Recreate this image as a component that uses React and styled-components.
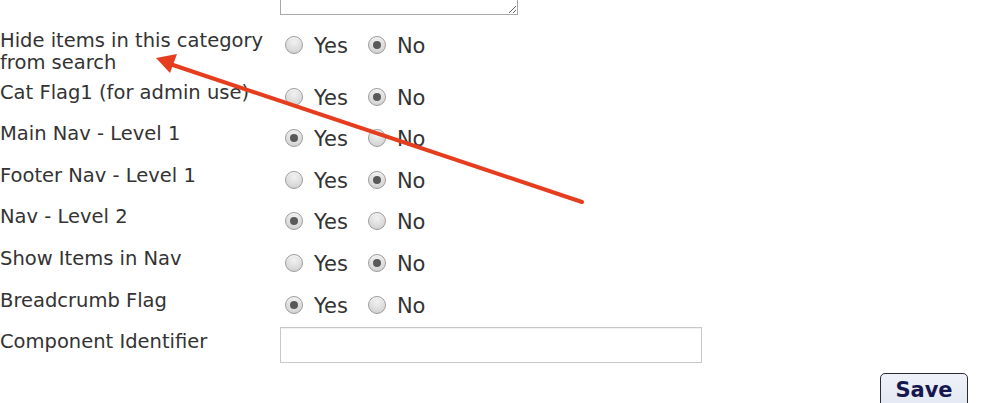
import React from 'react'
import styled, { createGlobalStyle } from 'styled-components'

const GlobalStyle = createGlobalStyle`
    html, body {
        margin: 0;
        padding: 0;
        background: #fff;
        overflow: hidden;
    }
    body {
        font-family: "DejaVu Sans", Verdana, sans-serif;
        color: #333;
    }
`

const flags = [
    { label: 'Hide items in this category from search', value: 'no' },
    { label: 'Cat Flag1 (for admin use)', value: 'no' },
    { label: 'Main Nav - Level 1', value: 'yes' },
    { label: 'Footer Nav - Level 1', value: 'no' },
    { label: 'Nav - Level 2', value: 'yes' },
    { label: 'Show Items in Nav', value: 'no' },
    { label: 'Breadcrumb Flag', value: 'yes' },
]

function Radio({ checked, text }) {
    return (
        <Option>
            <Circle checked={checked} />
            <span>{text}</span>
        </Option>
    )
}

function Arrow() {
    return (
        <Overlay width="1000" height="403" viewBox="0 0 1000 403">
            <line x1="582" y1="202" x2="170" y2="64" stroke="#e63d1e" strokeWidth="4" strokeLinecap="round" />
            <polygon points="156,58 177,54 170,73" fill="#e63d1e" />
        </Overlay>
    )
}

function App() {
    return (
        <Page>
            <GlobalStyle />
            <Form>
                <Row>
                    <Label />
                    <Control>
                        <TextArea defaultValue="" />
                    </Control>
                </Row>

                {flags.map((f) => (
                    <Row key={f.label}>
                        <Label>{f.label}</Label>
                        <Control>
                            <Radio checked={f.value === 'yes'} text="Yes" />
                            <Radio checked={f.value === 'no'} text="No" />
                        </Control>
                    </Row>
                ))}

                <Row>
                    <Label>Component Identifier</Label>
                    <Control>
                        <Input type="text" />
                    </Control>
                </Row>
            </Form>

            <Actions>
                <SaveButton>Save</SaveButton>
            </Actions>

            <Arrow />
        </Page>
    )
}

const Page = styled.div`
    position: relative;
    width: 1000px;
    height: 403px;
    overflow: hidden;
`

const Form = styled.div`
    display: flex;
    flex-direction: column;
    gap: 7.6px;
    margin-top: -11.6px;
`

const Row = styled.div`
    display: grid;
    grid-template-columns: 280px 1fr;
    align-items: start;
    min-height: 34px;
`

const Label = styled.div`
    font-size: 19.5px;
    line-height: 22px;
    width: 270px;
    color: #333;
`

const Control = styled.div`
    display: flex;
    align-items: center;
    padding-top: 3px;
    height: 22px;
    font-size: 21px;
    line-height: 22px;
    color: #333;
`

const Option = styled.label`
    display: inline-flex;
    align-items: center;
    margin-right: 15px;

    span {
        position: relative;
        top: 2px;
    }
`

const Circle = styled.i`
    display: inline-block;
    box-sizing: border-box;
    width: 18px;
    height: 18px;
    margin: 2px 11px 0 5px;
    border-radius: 50%;
    border: 1px solid #9c9c9c;
    background: radial-gradient(circle at 50% 30%, #f2f2f2 0%, #d9d9d9 65%, #c9c9c9 100%);
    box-shadow: inset 0 1px 1px rgba(255,255,255,0.8);
    position: relative;

    &::after {
        content: '';
        display: ${(p) => (p.checked ? 'block' : 'none')};
        position: absolute;
        left: 50%;
        top: 50%;
        width: 8px;
        height: 8px;
        margin: -4px 0 0 -4px;
        border-radius: 50%;
        background: #595959;
    }
`

const TextArea = styled.textarea`
    box-sizing: border-box;
    width: 238px;
    height: 28px;
    margin-top: -3px;
    border: 1px solid #a9a9a9;
    font-family: "DejaVu Sans", sans-serif;
`

const Input = styled.input`
    box-sizing: border-box;
    width: 422px;
    height: 36px;
    margin-top: 0;
    border: 1px solid #c9c9c9;
    box-shadow: inset 0 1px 1px rgba(0,0,0,0.06);
    outline: none;
`

const Actions = styled.div`
    display: flex;
    justify-content: flex-end;
    padding-right: 32px;
    margin-top: 8px;
`

const SaveButton = styled.button`
    width: 88px;
    height: 40px;
    padding: 0 0 6px;
    border: 1px solid #2b2b35;
    border-radius: 5px;
    background: linear-gradient(#eef1f8, #e2e7f2);
    color: #17174f;
    font-family: "DejaVu Sans", Verdana, sans-serif;
    font-weight: bold;
    font-size: 21px;
`

const Overlay = styled.svg`
    position: absolute;
    left: 0;
    top: 0;
    pointer-events: none;
`

export default App
